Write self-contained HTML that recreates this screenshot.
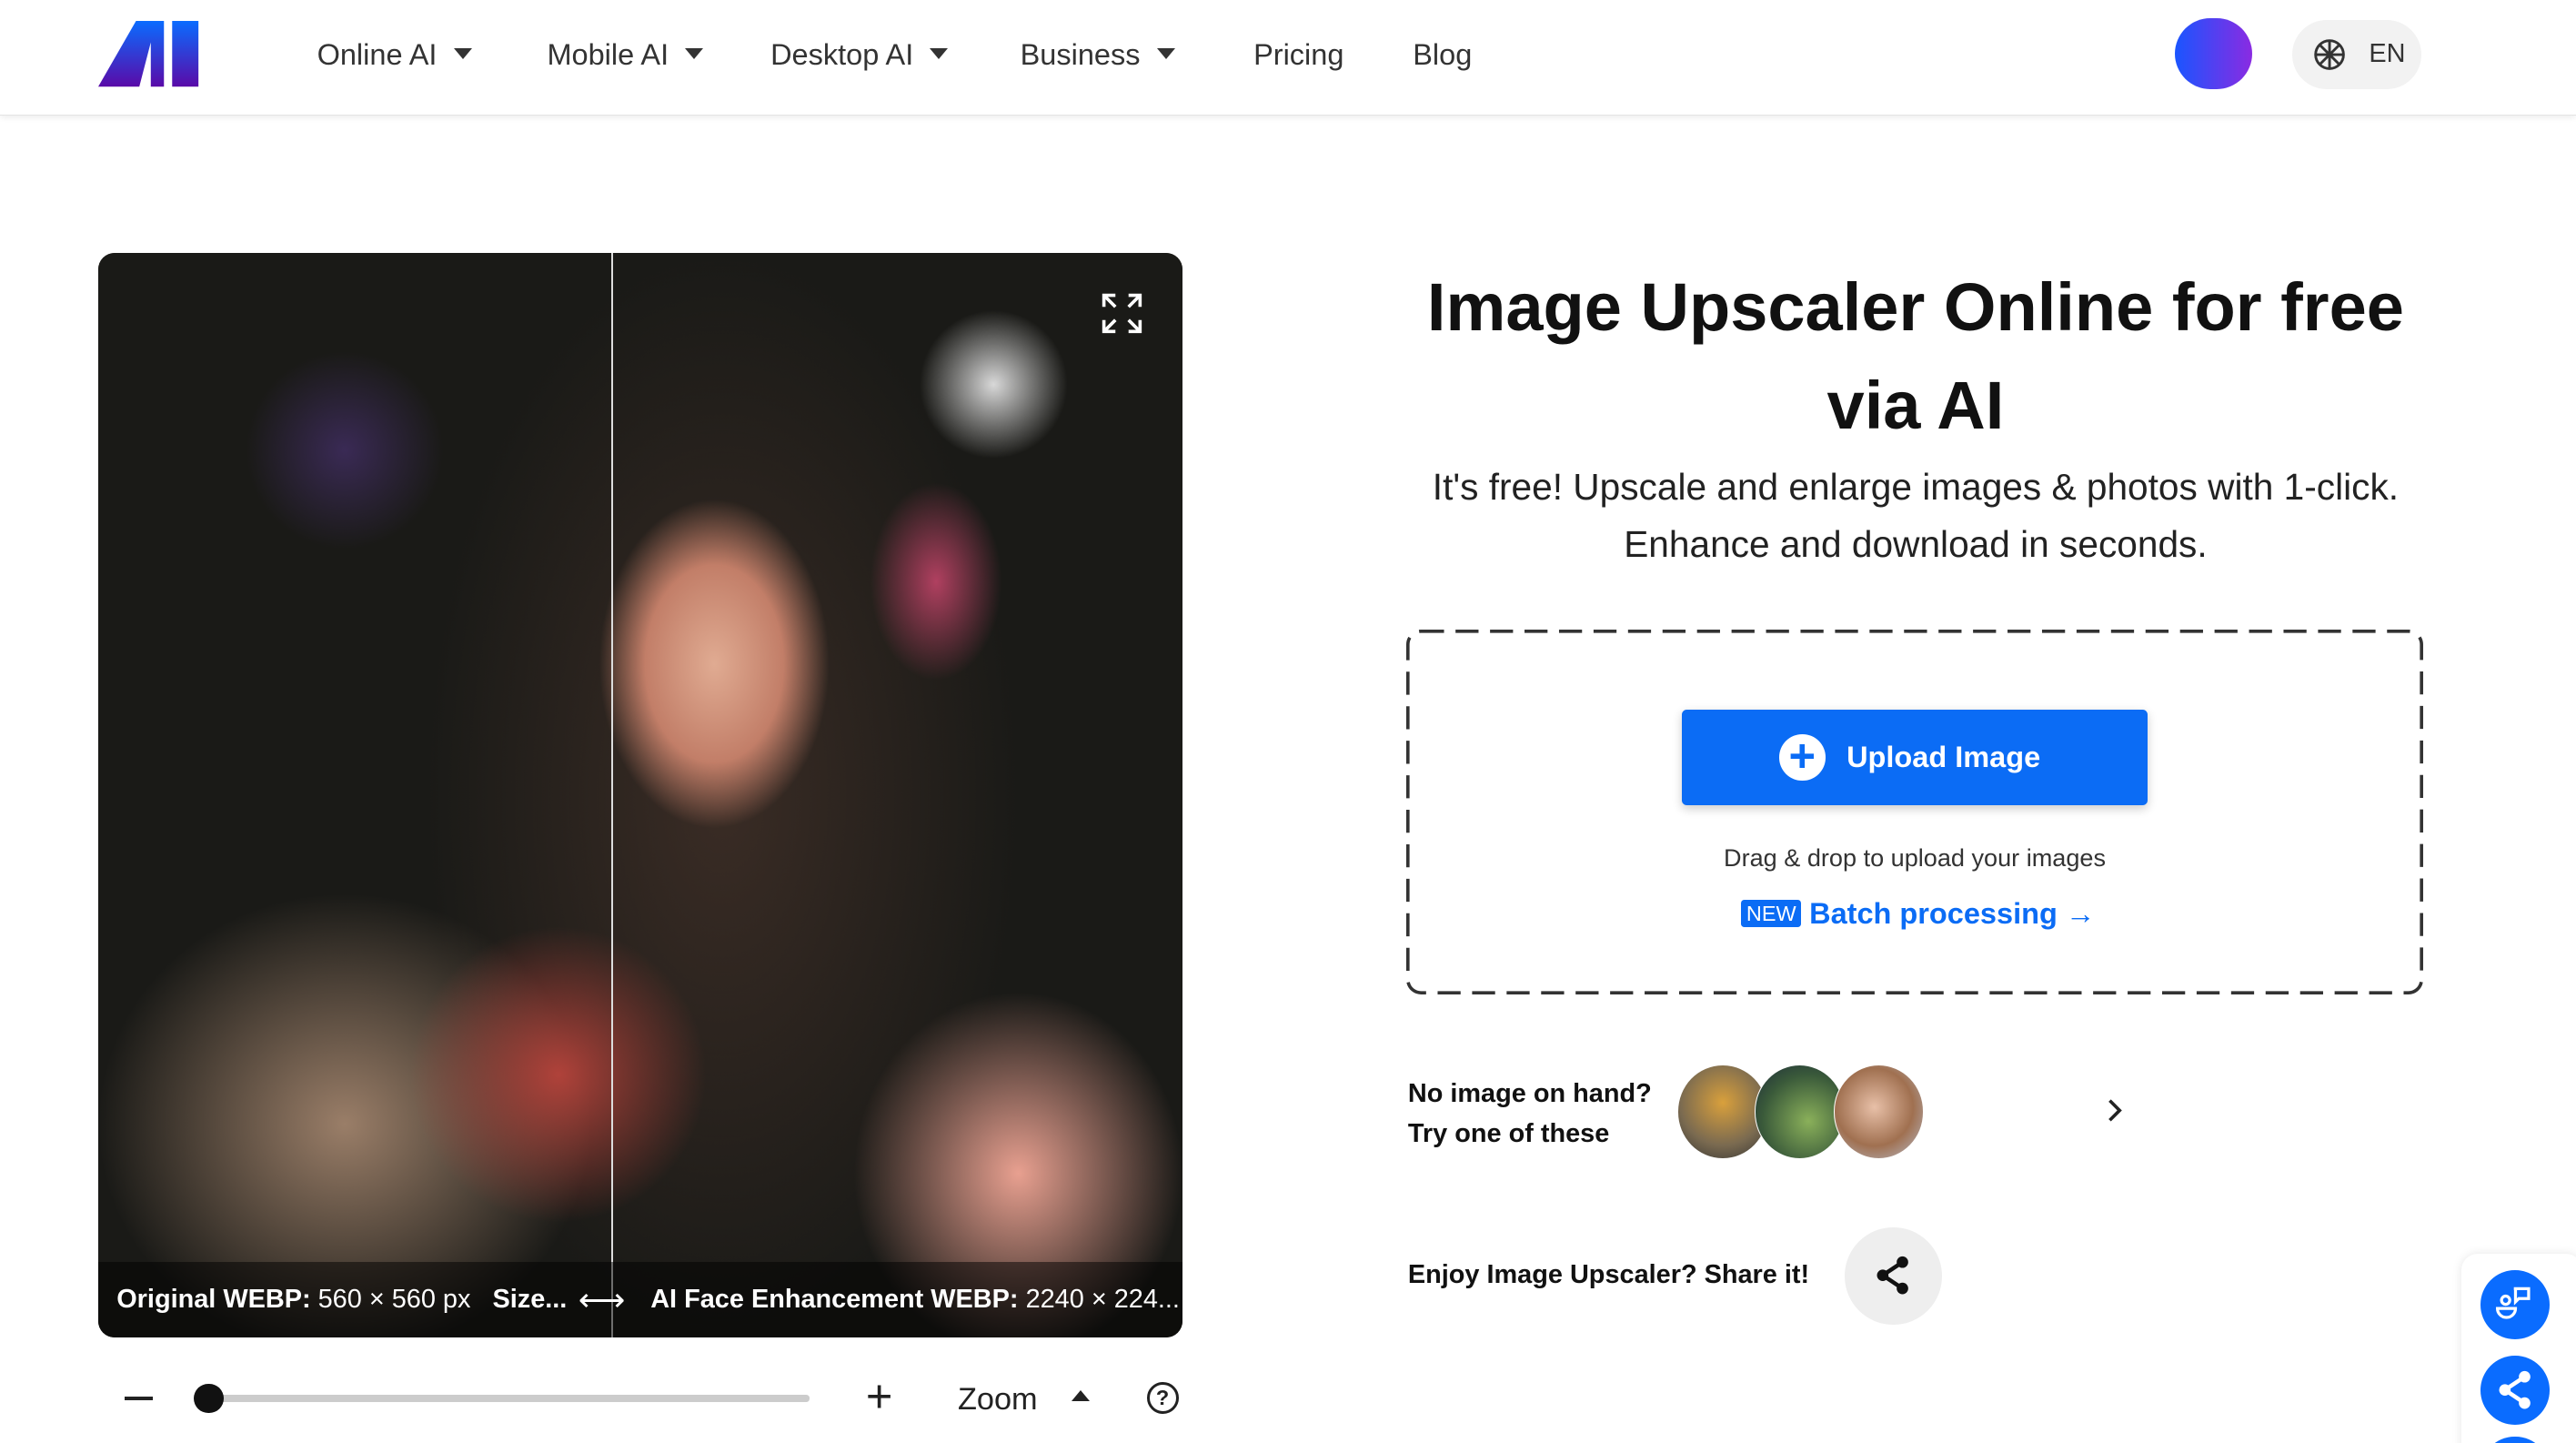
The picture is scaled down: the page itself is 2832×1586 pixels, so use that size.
<!DOCTYPE html>
<html><head><meta charset="utf-8"><style>
html,body{margin:0;padding:0;background:#fff;overflow:hidden}
body{width:1568px;height:878px;zoom:1.80612;position:relative;font-family:"Liberation Sans",sans-serif;color:#222}
.a{position:absolute}
.nav{font-size:18px;color:#333;top:23px}
.tri{display:inline-block;width:0;height:0;border-left:6px solid transparent;border-right:6px solid transparent;border-top:7px solid #333;margin-left:10px;vertical-align:3px}
</style></head><body>
<div class="a" style="left:0;top:0;width:1568px;height:70px;background:#fff;border-bottom:1px solid #e3e3e3;box-shadow:0 2px 3px rgba(0,0,0,.06)"></div>
<svg class="a" style="left:60px;top:13px" width="61" height="40" viewBox="0 0 61 40"><defs><linearGradient id="g" x1="0" y1="0" x2="0" y2="1"><stop offset="0" stop-color="#0a6cff"/><stop offset="1" stop-color="#5a0aa8"/></linearGradient></defs><path d="M23 0H40V40H32V13L25 40H0Z" fill="url(#g)"/><rect x="45" y="0" width="16" height="40" fill="url(#g)"/></svg>
<div class="a nav" style="left:193px">Online AI<span class="tri"></span></div>
<div class="a nav" style="left:333px">Mobile AI<span class="tri"></span></div>
<div class="a nav" style="left:469px">Desktop AI<span class="tri"></span></div>
<div class="a nav" style="left:621px">Business<span class="tri"></span></div>
<div class="a nav" style="left:763px">Pricing</div>
<div class="a nav" style="left:860px">Blog</div>
<div class="a" style="left:1324px;top:11px;width:47px;height:43px;border-radius:22px;background:linear-gradient(90deg,#1a55ff,#8a2be2)"></div>
<div class="a" style="left:1395px;top:12px;width:79px;height:42px;border-radius:21px;background:#f2f2f2;font-size:16px;color:#333">
<svg style="position:absolute;left:13px;top:11px" width="20" height="20" viewBox="0 0 20 20" fill="none" stroke="#333" stroke-width="1.6"><circle cx="10" cy="10" r="8.5"/><path d="M4 4L16 16M4 16L16 4M10 1.5V18.5M1.5 10H18.5"/></svg>
<span style="position:absolute;left:47px;top:12px">EN</span></div>

<div class="a" style="left:60px;top:154px;width:660px;height:660px;border-radius:10px;overflow:hidden;background:#1c1714">
 <div class="a" style="left:0;top:0;width:660px;height:660px;background:
 radial-gradient(ellipse 70px 100px at 375px 250px,#e0ab92,#c27e68 60%,transparent 100%),
 radial-gradient(ellipse 100px 110px at 560px 560px,#e8a090,transparent 100%),
 radial-gradient(ellipse 90px 90px at 280px 500px,#b0423a,transparent 100%),
 radial-gradient(ellipse 150px 140px at 150px 530px,#9a7e68,transparent 100%),
 radial-gradient(ellipse 45px 45px at 545px 80px,#d8d8d8,transparent 100%),
 radial-gradient(ellipse 40px 60px at 510px 200px,#b04060,transparent 100%),
 radial-gradient(ellipse 60px 60px at 150px 120px,#3a2a55,transparent 100%),
 radial-gradient(ellipse 180px 330px at 380px 330px,#3a2c25,transparent 100%),
 #1a1a17"></div>
 <div class="a" style="left:312px;top:0;width:1px;height:660px;background:#ddd"></div>
 <div class="a" style="left:0;top:614px;width:660px;height:46px;background:rgba(0,0,0,.5);color:#fff;font-size:16px;line-height:46px;white-space:nowrap">
  <span style="position:absolute;left:11px"><b>Original WEBP:</b> 560 × 560 px&nbsp;&nbsp;&nbsp;<b>Size...</b></span>
  <span style="position:absolute;left:292px;font-size:20px">⟷</span>
  <span style="position:absolute;left:336px"><b>AI Face Enhancement WEBP:</b> 2240 × 224...</span>
 </div>
 <svg class="a" style="left:610px;top:24px" width="26" height="26" viewBox="0 0 26 26" fill="none" stroke="#fff" stroke-width="2"><path d="M2 9V2H9M2 2L9 9M17 2H24V9M24 2L17 9M2 17V24H9M2 24L9 17M24 17V24H17M24 24L17 17"/></svg>
</div>
<div class="a" style="left:76px;top:850px;width:17px;height:2px;background:#222"></div>
<div class="a" style="left:128px;top:849px;width:365px;height:4px;background:#ccc;border-radius:2px"></div>
<div class="a" style="left:118px;top:842px;width:18px;height:18px;border-radius:50%;background:#111"></div>
<div class="a" style="left:527px;top:835px;font-size:28px;line-height:30px;color:#222">+</div>
<div class="a" style="left:583px;top:841px;font-size:19px;color:#222">Zoom</div>
<div class="a" style="left:652px;top:846px;border-left:6px solid transparent;border-right:6px solid transparent;border-bottom:7px solid #222"></div>
<div class="a" style="left:698px;top:841px;width:16px;height:16px;border:2px solid #222;border-radius:50%;font-size:13px;font-weight:bold;text-align:center;line-height:16px">?</div>

<div class="a" style="left:840px;top:157px;width:652px;text-align:center;font-size:41px;font-weight:bold;line-height:60px;color:#111">Image Upscaler Online for free via AI</div>
<div class="a" style="left:840px;top:279px;width:652px;text-align:center;font-size:22.5px;line-height:35px;color:#222">It's free! Upscale and enlarge images &amp; photos with 1-click. Enhance and download in seconds.</div>
<svg class="a" style="left:856px;top:383px" width="620" height="223"><rect x="1" y="1" width="617" height="220" rx="8" fill="none" stroke="#333" stroke-width="2" stroke-dasharray="14 7"/></svg>
<div class="a" style="left:1024px;top:432px;width:283px;height:58px;background:#0b6cf5;border-radius:3px;box-shadow:0 2px 6px rgba(0,0,0,.2);color:#fff;font-weight:bold;font-size:18px;line-height:58px"><span style="position:absolute;left:59px;top:15px;width:28px;height:28px;border-radius:50%;background:#fff;color:#0b6cf5;font-size:28px;line-height:27px;text-align:center">+</span><span style="position:absolute;left:100px">Upload Image</span></div>
<div class="a" style="left:857px;top:513px;width:617px;text-align:center;font-size:15px;color:#333">Drag &amp; drop to upload your images</div>
<div class="a" style="left:1060px;top:546px;color:#0b6cf5;font-size:18px;font-weight:bold"><span style="display:inline-block;background:#0b6cf5;color:#fff;font-size:13px;font-weight:normal;padding:1px 3px;border-radius:2px;vertical-align:2px">NEW</span> Batch processing →</div>

<div class="a" style="left:857px;top:654px;font-size:16px;font-weight:bold;line-height:24px;color:#111">No image on hand?<br>Try one of these</div>
<div class="a" style="left:1021px;top:648px;width:54px;height:56px;border-radius:50%;background:radial-gradient(circle at 50% 40%,#d9a03c,#7a6a50 60%,#333);border:1px solid #fff"></div>
<div class="a" style="left:1068px;top:648px;width:54px;height:56px;border-radius:50%;background:radial-gradient(circle at 60% 60%,#8ab05a,#3a5a3a 60%,#1c2a3a);border:1px solid #fff"></div>
<div class="a" style="left:1116px;top:648px;width:54px;height:56px;border-radius:50%;background:radial-gradient(circle at 45% 45%,#e8c0a8,#a07050 55%,#b8c0d0);border:1px solid #fff"></div>
<svg class="a" style="left:1281px;top:668px" width="12" height="16" viewBox="0 0 12 16"><path d="M3 2L9 8L3 14" stroke="#222" stroke-width="2" fill="none"/></svg>
<div class="a" style="left:857px;top:767px;font-size:16px;font-weight:bold;color:#111">Enjoy Image Upscaler? Share it!</div>
<div class="a" style="left:1123px;top:747px;width:59px;height:59px;border-radius:50%;background:#eee"></div>
<svg class="a" style="left:1140px;top:764px" width="24" height="24" viewBox="0 0 24 24"><path d="M18 4L6 12L18 20" stroke="#111" stroke-width="2.5" fill="none"/><circle cx="18" cy="4" r="3.5" fill="#111"/><circle cx="6" cy="12" r="3.5" fill="#111"/><circle cx="18" cy="20" r="3.5" fill="#111"/></svg>

<div class="a" style="left:1498px;top:763px;width:74px;height:130px;background:#fff;border-radius:10px;box-shadow:0 0 6px rgba(0,0,0,.1)"></div>
<div class="a" style="left:1510px;top:773px;width:42px;height:42px;border-radius:50%;background:#0a6cff"></div>
<svg class="a" style="left:1518px;top:781px" width="26" height="26" viewBox="0 0 26 26" fill="none" stroke="#fff" stroke-width="1.8"><circle cx="7" cy="10" r="2.5"/><path d="M2 15H13A5.5 5.5 0 0 1 2 15Z"/><path d="M12 3H21V9H15L13 11V3Z"/></svg>
<div class="a" style="left:1510px;top:825px;width:42px;height:42px;border-radius:50%;background:#0a6cff"></div>
<svg class="a" style="left:1519px;top:834px" width="24" height="24" viewBox="0 0 24 24"><path d="M18 4L6 12L18 20" stroke="#fff" stroke-width="2.5" fill="none"/><circle cx="18" cy="4" r="3.5" fill="#fff"/><circle cx="6" cy="12" r="3.5" fill="#fff"/><circle cx="18" cy="20" r="3.5" fill="#fff"/></svg>
<div class="a" style="left:1510px;top:874px;width:42px;height:42px;border-radius:50%;background:#0a6cff"></div>
</body></html>
